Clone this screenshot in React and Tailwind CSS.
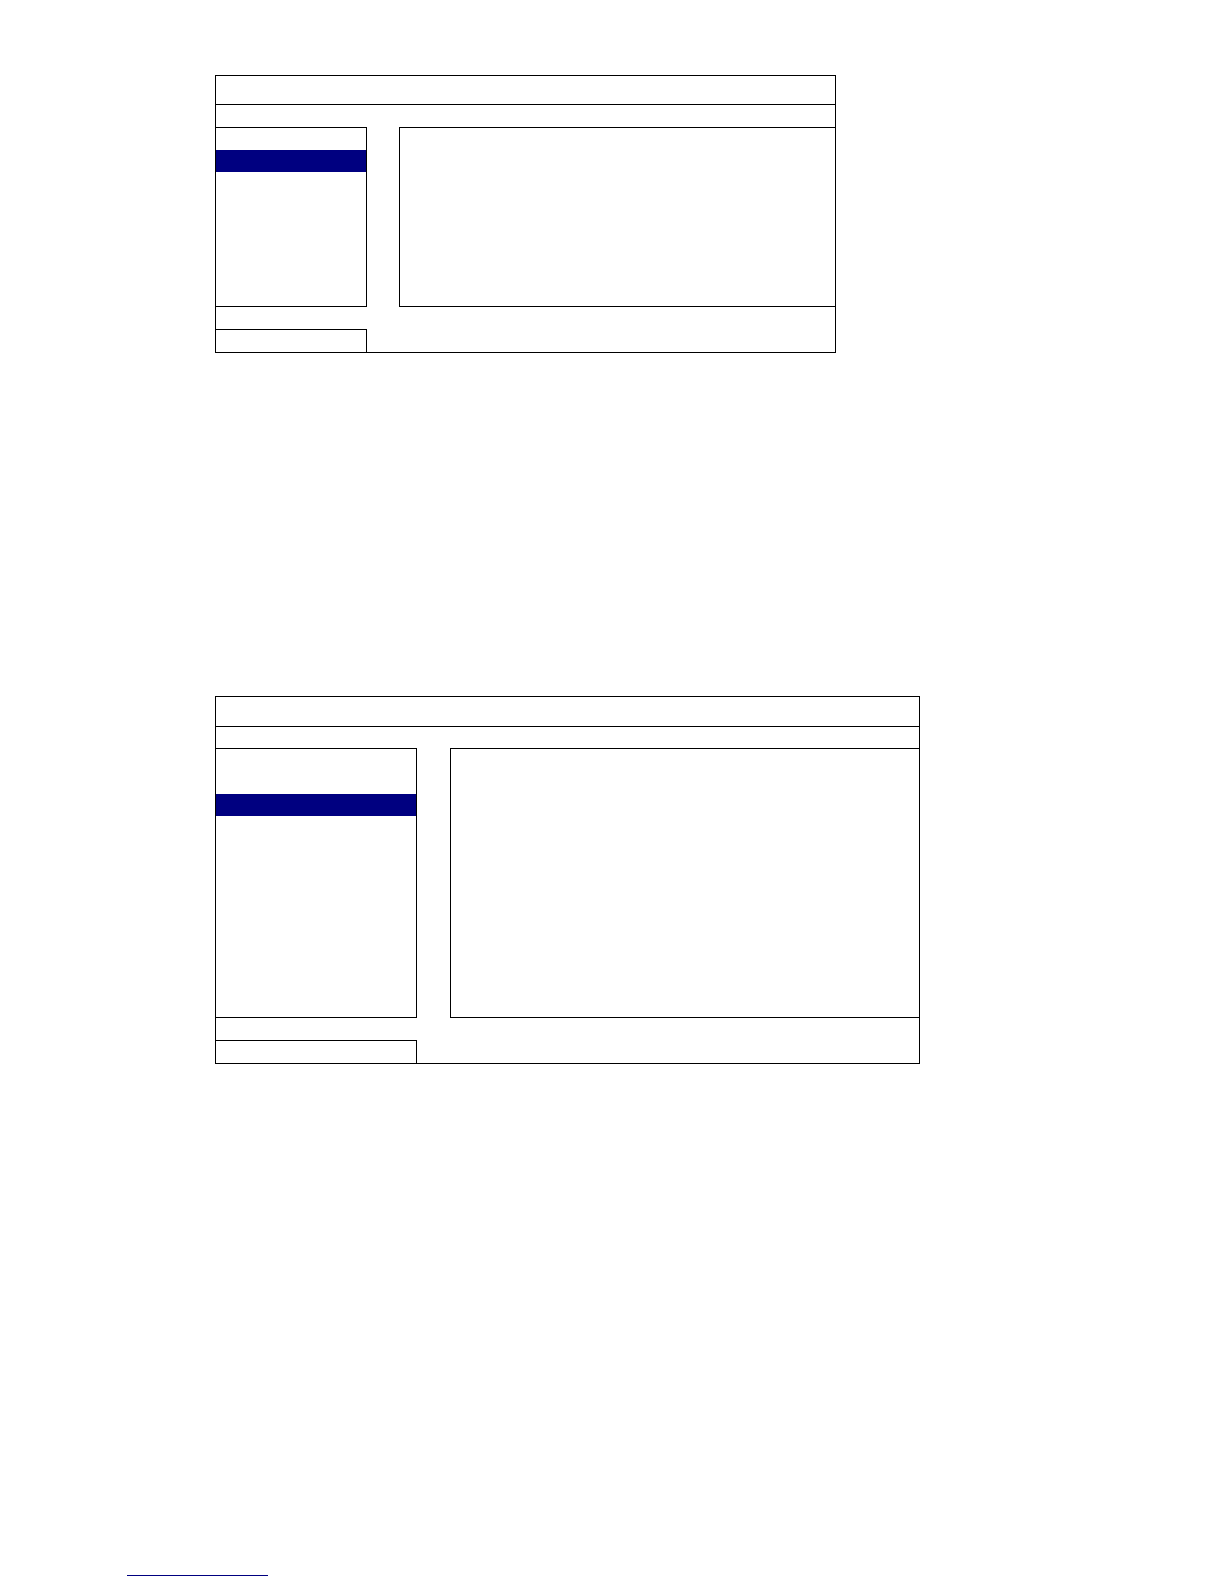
import React from 'react';

// A menu screen mock: title bar, tab row, list + detail panels, footer box.
const MenuScreen = ({ widthClass, titleClass, tabClass, panelClass, leftClass, gapClass, spacerClass }) => (
    <div className={`border border-black bg-white ${widthClass}`}>
        {/* Title bar */}
        <div className={`border-b border-black ${titleClass}`} />
        {/* Tab row */}
        <div className={tabClass} />
        {/* Panels */}
        <div className={`flex ${panelClass}`}>
            <div className={`flex flex-col border-t border-b border-r border-black ${leftClass}`}>
                <div className={spacerClass} />
                <div className="h-[22px] bg-[#000080]" />
            </div>
            <div className={gapClass} />
            <div className="flex-1 border-t border-b border-l border-black" />
        </div>
        {/* Footer */}
        <div className="flex h-[45px] flex-col justify-end">
            <div className={`h-[23px] border-t border-r border-black ${leftClass}`} />
        </div>
    </div>
);

export default function App() {
    return (
        <div className="min-h-[1584px] w-[1224px] bg-white pt-[75px] pl-[127px] font-['Liberation_Sans',Arial,sans-serif]">
            <div className="ml-[88px]">
                <MenuScreen
                    widthClass="w-[621px]"
                    titleClass="h-[29px]"
                    tabClass="h-[22px]"
                    panelClass="h-[180px]"
                    leftClass="w-[151px]"
                    gapClass="w-[32px]"
                    spacerClass="h-[22px]"
                />
            </div>
            <div className="ml-[88px] mt-[343px]">
                <MenuScreen
                    widthClass="w-[705px]"
                    titleClass="h-[30px]"
                    tabClass="h-[21px]"
                    panelClass="h-[270px]"
                    leftClass="w-[201px]"
                    gapClass="w-[33px]"
                    spacerClass="h-[45px]"
                />
            </div>
            <div className="mt-[511px] h-px w-[141px] bg-[#000080]" />
        </div>
    );
}
